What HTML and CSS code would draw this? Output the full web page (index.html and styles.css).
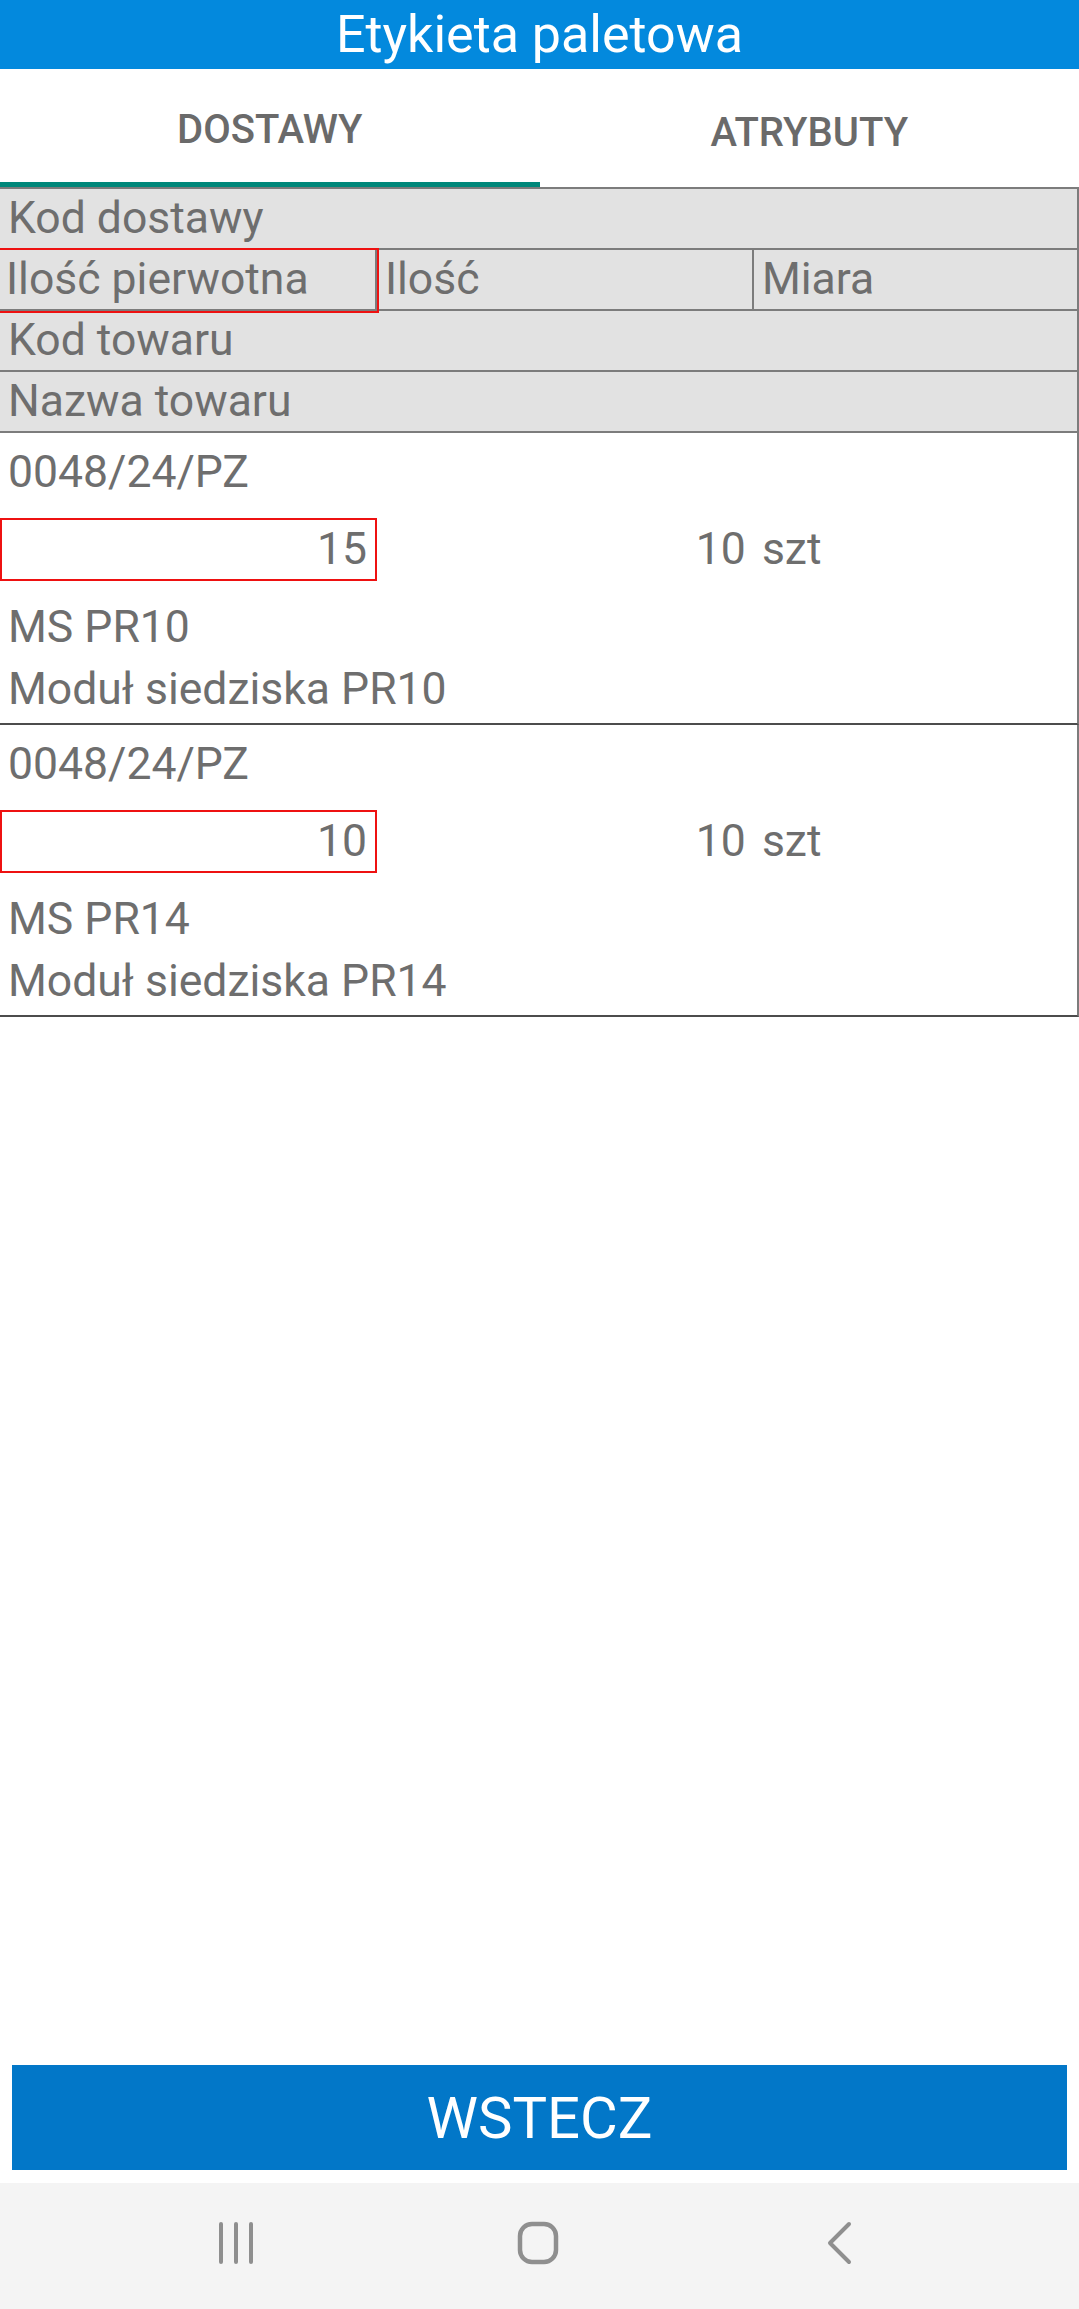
FILE: index.html
```html
<!DOCTYPE html>
<html lang="pl">
<head>
  <meta charset="UTF-8" />
  <meta name="viewport" content="width=device-width, initial-scale=1.0"/>
  <title>Etykieta paletowa</title>
  <link rel="stylesheet" href="styles.css">
</head>
<body>
  <div class="screen">
    <header class="appbar">Etykieta paletowa</header>

    <nav class="tabs">
      <div class="tab active">DOSTAWY</div>
      <div class="tab">ATRYBUTY</div>
    </nav>

    <!-- Column headers -->
    <div class="grid-head">
      <div class="hrow">Kod dostawy</div>
      <div class="hrow cols">
        <div class="hcell marked">Ilość pierwotna</div>
        <div class="hcell">Ilość</div>
        <div class="hcell">Miara</div>
      </div>
      <div class="hrow">Kod towaru</div>
      <div class="hrow">Nazwa towaru</div>
    </div>

    <!-- Items -->
    <div class="item">
      <div class="line first">0048/24/PZ</div>
      <div class="cols qty">
        <div class="qty-box">15</div>
        <div class="qty-val">10</div>
        <div class="qty-unit">szt</div>
      </div>
      <div class="line code">MS PR10</div>
      <div class="line">Moduł siedziska PR10</div>
    </div>

    <div class="item">
      <div class="line first">0048/24/PZ</div>
      <div class="cols qty">
        <div class="qty-box">10</div>
        <div class="qty-val">10</div>
        <div class="qty-unit">szt</div>
      </div>
      <div class="line code">MS PR14</div>
      <div class="line">Moduł siedziska PR14</div>
    </div>

    <div class="spacer"></div>

    <button class="back-btn">WSTECZ</button>

    <div class="navbar">
      <div class="nav-item">
        <svg width="40" height="44" viewBox="0 0 40 44">
          <path d="M5 3v38M20 3v38M35 3v38" stroke="#8f8f8f" stroke-width="4" stroke-linecap="round" fill="none"/>
        </svg>
      </div>
      <div class="nav-item">
        <svg width="44" height="46" viewBox="0 0 44 46">
          <rect x="4" y="4" width="36" height="38" rx="12" stroke="#8f8f8f" stroke-width="4.5" fill="none"/>
        </svg>
      </div>
      <div class="nav-item">
        <svg width="30" height="44" viewBox="0 0 30 44">
          <path d="M24 3L5 22l19 19" stroke="#8f8f8f" stroke-width="4" stroke-linecap="round" stroke-linejoin="round" fill="none"/>
        </svg>
      </div>
    </div>
  </div>
</body>
</html>
```

FILE: styles.css
```css
* {
  box-sizing: border-box;
}

body {
  margin: 0;
  padding: 0;
  font-family: Roboto, "Liberation Sans", sans-serif;
  background: #fff;
  color: #6e6e6e;
}

.screen {
  width: 1079px;
  height: 2309px;
  display: flex;
  flex-direction: column;
}

.appbar {
  height: 69px;
  background: #0389dd;
  color: #fff;
  font-size: 52px;
  line-height: 69px;
  text-align: center;
}

.tabs {
  height: 118px;
  display: flex;
}

.tab {
  flex: 1;
  display: flex;
  align-items: center;
  justify-content: center;
  font-size: 40px;
  font-weight: 500;
  color: #6a6a6a;
  padding-top: 8px;
}

.tab.active {
  border-bottom: 5px solid #00877a;
}

/* header grid */
.grid-head {
  border-top: 2px solid #7c7c7c;
  background: #e2e2e2;
}

.hrow {
  height: 61px;
  line-height: 59px;
  font-size: 44.5px;
  padding-left: 8px;
  border-bottom: 2px solid #7c7c7c;
  border-right: 2px solid #7c7c7c;
}

.cols {
  display: grid;
  grid-template-columns: 35fr 35fr 30fr;
}

.hrow.cols {
  padding-left: 0;
}

.hcell {
  padding-left: 8px;
  border-right: 2px solid #7c7c7c;
  white-space: nowrap;
}

.hcell:last-child {
  border-right: none;
}

.hcell.marked {
  outline: 2px solid #ee1111;
  height: 61px;
  padding-left: 6px;
}

/* items */
.item {
  font-size: 44.5px;
  border-right: 2px solid #7c7c7c;
  border-bottom: 2px solid #4c4c4c;
  padding-bottom: 3px;
}

.line {
  padding-left: 8px;
  height: 62px;
  line-height: 62px;
  white-space: nowrap;
}

.line.first {
  height: 85px;
  line-height: 79px;
}

.line.code {
  margin-top: 15px;
}

.qty {
  height: 63px;
  line-height: 59px;
}

.qty-box {
  border: 2px solid #ee1111;
  text-align: right;
  padding-right: 8px;
}

.qty-val {
  text-align: right;
  padding: 2px 8px 0 0;
}

.qty-unit {
  padding: 2px 0 0 8px;
}

.spacer {
  flex: 1;
}

.back-btn {
  height: 105px;
  margin: 0 12px 13px;
  border: none;
  background: #0277c8;
  color: #fff;
  font-family: Roboto, "Liberation Sans", sans-serif;
  font-size: 58px;
  padding: 0;
  cursor: pointer;
}

.navbar {
  height: 126px;
  background: #f4f4f4;
  display: flex;
  justify-content: center;
  align-items: center;
  padding-right: 4px;
}

.nav-item {
  width: 302px;
  display: flex;
  justify-content: center;
  align-items: center;
  padding-bottom: 6px;
}
```
